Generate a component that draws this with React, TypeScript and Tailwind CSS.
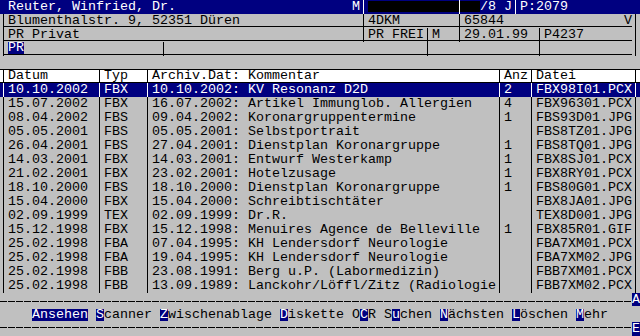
import React from 'react';

type Row = {
  datum: string;
  typ: string;
  kommentar: string;
  anz: string;
  datei: string;
};

const rows: Row[] = [
  { datum: '10.10.2002', typ: 'FBX', kommentar: '10.10.2002: KV Resonanz D2D', anz: '2', datei: 'FBX98I01.PCX' },
  { datum: '15.07.2002', typ: 'FBX', kommentar: '16.07.2002: Artikel Immunglob. Allergien', anz: '4', datei: 'FBX96301.PCX' },
  { datum: '08.04.2002', typ: 'FBS', kommentar: '09.04.2002: Koronargruppentermine', anz: '1', datei: 'FBS93D01.JPG' },
  { datum: '05.05.2001', typ: 'FBS', kommentar: '05.05.2001: Selbstportrait', anz: '', datei: 'FBS8TZ01.JPG' },
  { datum: '26.04.2001', typ: 'FBS', kommentar: '27.04.2001: Dienstplan Koronargruppe', anz: '1', datei: 'FBS8TQ01.JPG' },
  { datum: '14.03.2001', typ: 'FBX', kommentar: '14.03.2001: Entwurf Westerkamp', anz: '1', datei: 'FBX8SJ01.PCX' },
  { datum: '21.02.2001', typ: 'FBX', kommentar: '23.02.2001: Hotelzusage', anz: '1', datei: 'FBX8RY01.PCX' },
  { datum: '18.10.2000', typ: 'FBS', kommentar: '18.10.2000: Dienstplan Koronargruppe', anz: '1', datei: 'FBS80G01.PCX' },
  { datum: '15.04.2000', typ: 'FBX', kommentar: '15.04.2000: Schreibtischtäter', anz: '', datei: 'FBX8JA01.JPG' },
  { datum: '02.09.1999', typ: 'TEX', kommentar: '02.09.1999: Dr.R.', anz: '', datei: 'TEX8D001.JPG' },
  { datum: '15.12.1998', typ: 'FBX', kommentar: '15.12.1998: Menuires Agence de Belleville', anz: '1', datei: 'FBX85R01.GIF' },
  { datum: '25.02.1998', typ: 'FBA', kommentar: '07.04.1995: KH Lendersdorf Neurologie', anz: '', datei: 'FBA7XM01.PCX' },
  { datum: '25.02.1998', typ: 'FBA', kommentar: '19.04.1995: KH Lendersdorf Neurologie', anz: '', datei: 'FBA7XM02.JPG' },
  { datum: '25.02.1998', typ: 'FBB', kommentar: '23.08.1991: Berg u.P. (Labormedizin)', anz: '', datei: 'FBB7XM01.PCX' },
  { datum: '25.02.1998', typ: 'FBB', kommentar: '13.09.1989: Lanckohr/Löffl/Zitz (Radiologie', anz: '', datei: 'FBB7XM02.PCX' },
];

// one 8px character cell holding a box-drawing line
function Sep({ line = 'bg-black', l = false, r = false }: { line?: string; l?: boolean; r?: boolean }) {
  return (
    <div className="flex w-2 shrink-0">
      <div className={`w-[3px] h-[13px] ${l ? 'border-b border-black' : ''}`} />
      <div className={`w-px ${line}`} />
      <div className={`w-1 h-[13px] ${r ? 'border-b border-black' : ''}`} />
    </div>
  );
}

function UCell({ w, children, className = '' }: { w: string; children?: React.ReactNode; className?: string }) {
  return (
    <div className={`${w} shrink-0 h-[13px] leading-[13px] border-b border-black whitespace-pre ${className}`}>{children}</div>
  );
}

function Hl({ children }: { children: React.ReactNode }) {
  return <span className="inline-block h-[12px] leading-[12px] bg-[#000080] text-white align-top">{children}</span>;
}

function TableRow({ r, sel = false, header = false }: { r: Row; sel?: boolean; header?: boolean }) {
  const line = sel ? 'bg-white' : 'bg-black';
  const bg = header
    ? 'h-[13px] leading-[12px] bg-white border-b border-black'
    : sel
      ? 'h-[14px] bg-[#000080] text-white'
      : 'h-[14px]';
  return (
    <div className={`flex ${bg}`}>
      <Sep line={line} />
      <div className="w-[88px] shrink-0 whitespace-pre">{r.datum}</div>
      <Sep line={line} />
      <div className="w-10 shrink-0 whitespace-pre">{r.typ}</div>
      <Sep line={line} />
      <div className="w-[344px] shrink-0 whitespace-pre">{r.kommentar}</div>
      <Sep line={line} />
      <div className="w-6 shrink-0 whitespace-pre">{r.anz}</div>
      <Sep line={line} />
      <div className="w-24 shrink-0 whitespace-pre">{r.datei}</div>
      <Sep line={line} />
    </div>
  );
}

const dash = 'h-px bg-[repeating-linear-gradient(90deg,#000_0_7px,transparent_7px_8px)]';

export default function App() {
  return (
    <div className="w-[640px] h-[336px] overflow-hidden bg-[#c0c0c0] text-black font-['Liberation_Mono',monospace] text-[13.333px] leading-[14px]">
      {/* title */}
      <div className="flex h-[14px] bg-[#000080] text-white">
        <div className="w-[352px] shrink-0 pl-2 whitespace-pre">Reuter, Winfried, Dr.</div>
        <div className="w-2 shrink-0">M</div>
        <Sep line="bg-white" />
        <div className="w-[88px] shrink-0 h-[11px] mt-px bg-black" />
        <div className="flex w-2 shrink-0">
          <div className="w-[3px] h-[11px] mt-px bg-black" />
          <div className="w-px bg-white" />
          <div className="w-1 h-[11px] mt-px bg-black" />
        </div>
        <div className="w-4 shrink-0 h-[11px] mt-px bg-black" />
        <div className="w-8 shrink-0 whitespace-pre">/8 J</div>
        <Sep line="bg-white" />
        <div className="w-[120px] shrink-0">P:2079</div>
      </div>

      <div className="flex h-[14px]">
        <Sep r />
        <UCell w="w-[352px]">Blumenthalstr. 9, 52351 Düren</UCell>
        <Sep l r />
        <UCell w="w-[88px]">4DKM</UCell>
        <Sep l r />
        <UCell w="w-[168px]" className="flex justify-between">
          <span>65844</span>
          <span>V</span>
        </UCell>
        <Sep />
      </div>

      <div className="flex h-[14px]">
        <Sep r />
        <UCell w="w-[352px]">PR Privat</UCell>
        <Sep l r />
        <UCell w="w-14">PR FREI</UCell>
        <Sep l r />
        <UCell w="w-6">M</UCell>
        <Sep l r />
        <UCell w="w-[72px]">29.01.99</UCell>
        <Sep l r />
        <UCell w="w-[88px]">P4237</UCell>
        <Sep />
      </div>

      <div className="flex h-[14px]">
        <Sep r />
        <UCell w="w-[152px]" className="flex items-start">
          <Hl>PR</Hl>
        </UCell>
        <Sep l r />
        <UCell w="w-[256px]" />
        <Sep l r />
        <UCell w="w-[104px]" />
        <Sep l r />
        <UCell w="w-[88px]" />
        <Sep />
      </div>

      <div className="h-[14px] border-b border-black" />

      <TableRow header r={{ datum: 'Datum', typ: 'Typ', kommentar: 'Archiv.Dat: Kommentar', anz: 'Anz', datei: 'Datei' }} />
      {rows.map((r, i) => (
        <TableRow key={i} r={r} sel={i === 0} />
      ))}

      <div className="flex h-[14px]">
        <div className="w-[632px] shrink-0 pt-2">
          <div className={dash} />
        </div>
        <div className="w-2 shrink-0 h-[13px] bg-[#000080] text-white leading-[13px]">A</div>
      </div>

      <div className="flex h-[14px] pl-8 pt-[2px] leading-[12px] whitespace-pre">
        <Hl>Ansehen</Hl>
        <span> </span>
        <Hl>S</Hl>
        <span>canner </span>
        <Hl>Z</Hl>
        <span>wischenablage </span>
        <Hl>D</Hl>
        <span>iskette O</span>
        <Hl>C</Hl>
        <span>R S</span>
        <Hl>u</Hl>
        <span>chen </span>
        <Hl>N</Hl>
        <span>ächsten </span>
        <Hl>L</Hl>
        <span>öschen </span>
        <Hl>M</Hl>
        <span>ehr</span>
      </div>

      <div className="flex h-[15px]">
        <div className="w-[632px] shrink-0 pt-[6px]">
          <div className={dash} />
        </div>
        <div className="w-2 shrink-0 h-[14px] mt-px bg-[#000080] text-white leading-[14px]">E</div>
      </div>
    </div>
  );
}
